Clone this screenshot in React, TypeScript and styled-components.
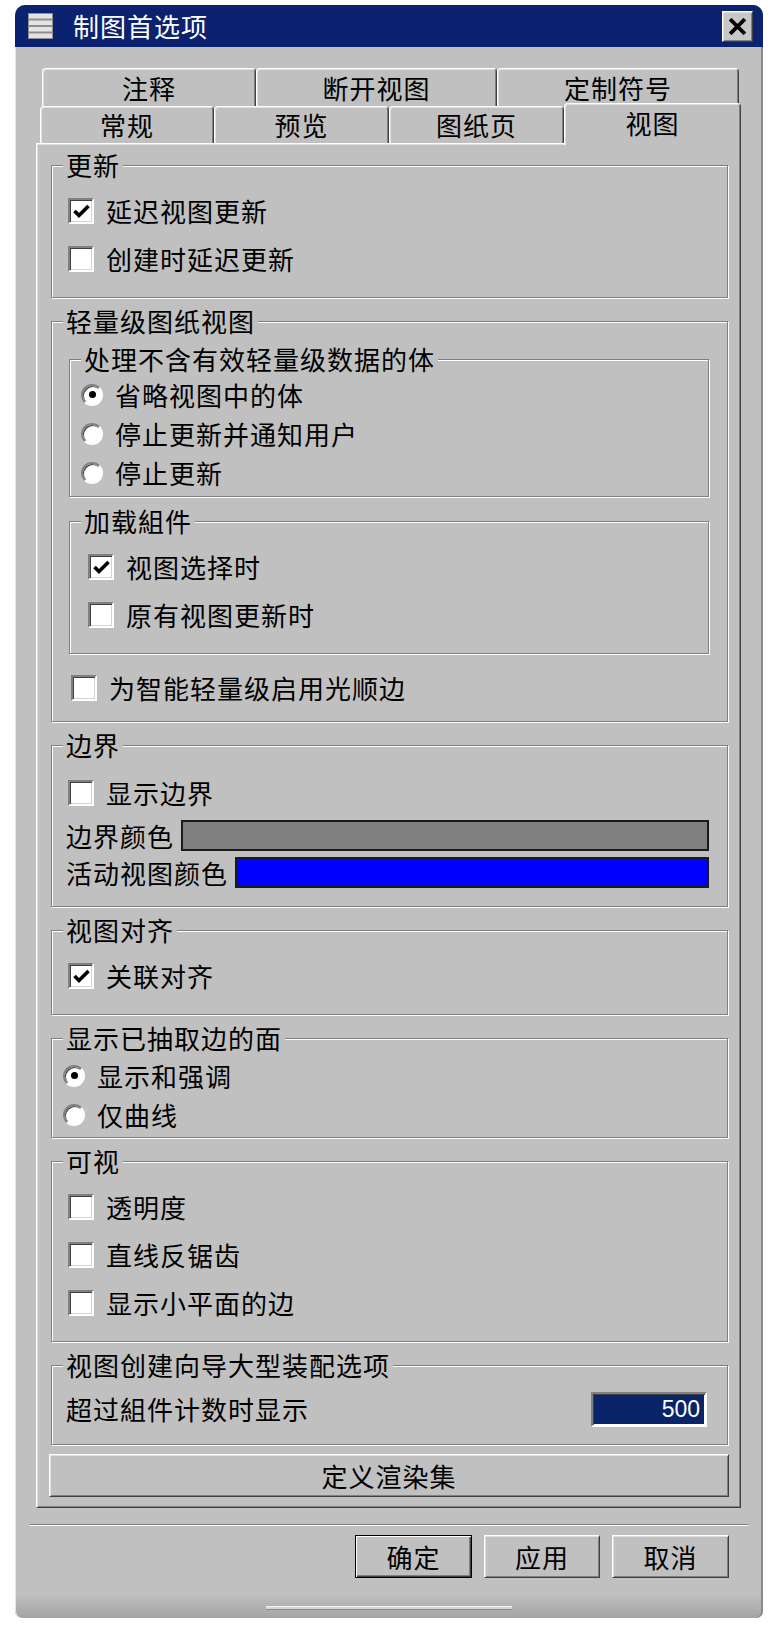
import React from 'react'
import styled, { createGlobalStyle, css } from 'styled-components'

const FONT = `"Noto Sans CJK SC", "Noto Sans", sans-serif`
const FACE = '#c0c0c0'

const GlobalStyle = createGlobalStyle`
  html, body {
    margin: 0;
    padding: 0;
    background: #fff;
  }
  body {
    font-family: ${FONT};
  }
`

const raised = css`
  border: 1px solid;
  border-color: #fff #404040 #404040 #fff;
  box-shadow: inset 1px 1px 0 #dfdfdf, inset -1px -1px 0 #808080;
`

const Window = styled.div`
  width: 748px;
  height: 1613px;
  margin: 5px 0 0 15px;
  box-sizing: border-box;
  display: flex;
  flex-direction: column;
  border-radius: 10px 10px 7px 7px;
  overflow: hidden;
  background: linear-gradient(to bottom, ${FACE} calc(100% - 24px), #a4a4a4 100%);
  box-shadow: inset 1px 0 0 #e4e4e4, inset -2px 0 0 #8a8a8a;
  font-family: ${FONT};
  font-size: 26px;
  letter-spacing: 1px;
  color: #000;
`

const TitleBar = styled.div`
  height: 42px;
  flex: none;
  display: flex;
  align-items: center;
  padding: 0 10px 0 13px;
  background: #0b2270;
`

const Title = styled.div`
  flex: 1;
  margin-left: 20px;
  color: #fff;
  line-height: 1;
`

const CloseButton = styled.div`
  width: 31px;
  height: 31px;
  box-sizing: border-box;
  display: flex;
  align-items: center;
  justify-content: center;
  background: #c8c8c8;
  ${raised}
`

const Body = styled.div`
  padding: 21px 22px 0 21px;
`

const TabStrip = styled.div`
  display: flex;
  flex-direction: column;
`

const TabRow = styled.div<{ $h: number; $indent: number }>`
  display: flex;
  align-items: flex-start;
  height: ${p => p.$h}px;
  padding-left: ${p => p.$indent}px;
`

const Tab = styled.div<{ $w: number; $h: number; $active?: boolean }>`
  width: ${p => p.$w}px;
  height: ${p => (p.$active ? p.$h + 5 : p.$h)}px;
  flex: none;
  box-sizing: border-box;
  display: flex;
  align-items: center;
  justify-content: center;
  line-height: 1;
  border-style: solid;
  border-width: 1px 1px 0 1px;
  border-color: #fff #404040 transparent #fff;
  border-radius: 4px 4px 0 0;
  box-shadow: inset 1px 1px 0 #dfdfdf, inset -1px 0 0 #808080;
  background: ${FACE};
  ${p =>
    p.$active &&
    css`
      margin-top: -3px;
      padding-bottom: 4px;
      position: relative;
      z-index: 1;
    `}
`

const Panel = styled.div`
  display: flex;
  flex-direction: column;
  gap: 9px;
  padding: 7px 12px 10px 14px;
  border: 1px solid;
  border-color: #fff #404040 #404040 #fff;
  box-shadow: inset 1px 1px 0 #dfdfdf, inset -1px -1px 0 #808080;
`

const Fieldset = styled.fieldset<{ $pad?: number; $pt?: number; $pb?: number; $gap?: number }>`
  margin: 0;
  min-width: 0;
  display: flex;
  flex-direction: column;
  gap: ${p => p.$gap ?? 0}px;
  border: 1px solid #808080;
  box-shadow: inset 1px 1px 0 #fff, 1px 1px 0 #fff;
  padding: ${p => p.$pt ?? 8}px 18px ${p => p.$pb ?? 14}px ${p => p.$pad ?? 14}px;
`

const Legend = styled.legend<{ $pad?: number }>`
  padding: 0 3px;
  margin-left: ${p => 11 - (p.$pad ?? 14)}px;
  line-height: 28px;
  background: ${FACE};
`

const OptionRow = styled.div<{ $h?: number }>`
  display: flex;
  align-items: center;
  gap: 12px;
  height: ${p => p.$h ?? 48}px;
  line-height: 1;
  white-space: nowrap;
`

const Box = styled.span`
  flex: none;
  width: 26px;
  height: 26px;
  margin-left: 2px;
  box-sizing: border-box;
  display: flex;
  align-items: center;
  justify-content: center;
  background: #fff;
  border: 2px solid;
  border-color: #808080 #fff #fff #808080;
  box-shadow: inset 1px 1px 0 #404040, inset -1px -1px 0 #d4d4d4;
`

const RadioDot = styled.span<{ $on?: boolean }>`
  flex: none;
  width: 22px;
  height: 22px;
  margin-left: -3px;
  box-sizing: border-box;
  display: flex;
  align-items: center;
  justify-content: center;
  border-radius: 50%;
  background: #fff;
  border: 2px solid;
  border-color: #808080 #fff #fff #808080;
  box-shadow: inset 1px 1px 0 #404040;
  &::after {
    content: '';
    width: 7px;
    height: 7px;
    border-radius: 50%;
    background: ${p => (p.$on ? '#000' : 'transparent')};
  }
`

const ColorRow = styled.div`
  display: flex;
  align-items: center;
  gap: 7px;
  height: 37px;
  line-height: 1;
  white-space: nowrap;
`

const Swatch = styled.div<{ $color: string }>`
  flex: 1;
  height: 31px;
  box-sizing: border-box;
  border: 2px solid #1a1a1a;
  background: ${p => p.$color};
`

const InputRow = styled.div`
  display: flex;
  align-items: center;
  justify-content: space-between;
  height: 44px;
  line-height: 1;
`

const NumberBox = styled.div`
  width: 116px;
  height: 35px;
  margin-right: 2px;
  box-sizing: border-box;
  padding: 1px;
  background: #fff;
  border: 2px solid;
  border-color: #808080 #fff #fff #808080;
  box-shadow: inset 1px 1px 0 #404040;
`

const NumberValue = styled.div`
  height: 100%;
  display: flex;
  align-items: center;
  justify-content: flex-end;
  padding-right: 4px;
  background: #0a246a;
  color: #fff;
  font-family: "Liberation Sans", Arial, sans-serif;
  font-size: 23px;
  letter-spacing: 0;
`

const WideButton = styled.div`
  height: 43px;
  margin: 0 -1px 0 -2px;
  box-sizing: border-box;
  display: flex;
  align-items: center;
  justify-content: center;
  line-height: 1;
  ${raised}
`

const Separator = styled.div`
  margin: 16px 15px 0;
  border-top: 1px solid #808080;
  border-bottom: 1px solid #fff;
`

const ButtonBar = styled.div`
  display: flex;
  justify-content: flex-end;
  gap: 12px;
  padding: 9px 34px 0 0;
`

const DialogButton = styled.div<{ $w: number; $default?: boolean }>`
  width: ${p => p.$w}px;
  height: 43px;
  box-sizing: border-box;
  display: flex;
  align-items: center;
  justify-content: center;
  line-height: 1;
  ${p =>
    p.$default
      ? css`
          border: 1px solid #000;
          box-shadow: inset 1px 1px 0 #fff, inset -1px -1px 0 #404040, inset -2px -2px 0 #808080;
        `
      : raised}
`

const Foot = styled.div`
  flex: 1;
  display: flex;
  justify-content: center;
  padding-top: 28px;
`

const Grip = styled.div`
  width: 246px;
  height: 2px;
  background: #d6d6d6;
  border-top: 1px solid #f2f2f2;
  border-bottom: 1px solid #8a8a8a;
`

const MenuIcon = () => (
  <svg width="25" height="26" viewBox="0 0 25 26">
    <rect width="25" height="26" fill="#8e8e8e" />
    {[1, 7.5, 14, 20.5].map(y => (
      <rect key={y} x="1" y={y} width="23" height="4.5" fill="#e4e4e4" />
    ))}
  </svg>
)

const CloseIcon = () => (
  <svg width="17" height="17" viewBox="0 0 17 17">
    <path d="M2.5 2.5 L14.5 14.5 M14.5 2.5 L2.5 14.5" stroke="#000" strokeWidth="3.8" strokeLinecap="square" />
  </svg>
)

const CheckMark = () => (
  <svg width="19" height="19" viewBox="0 0 19 19">
    <path d="M2.5 9 L7 13.5 L16.5 4" fill="none" stroke="#000" strokeWidth="3.6" />
  </svg>
)

const Check: React.FC<{ label: string; on?: boolean }> = ({ label, on }) => (
  <OptionRow>
    <Box>{on && <CheckMark />}</Box>
    <span>{label}</span>
  </OptionRow>
)

const Radio: React.FC<{ label: string; on?: boolean }> = ({ label, on }) => (
  <OptionRow $h={39}>
    <RadioDot $on={on} />
    <span>{label}</span>
  </OptionRow>
)

const backTabs = [
  { txt: '注释', w: 214 },
  { txt: '断开视图', w: 241 },
  { txt: '定制符号', w: 242 },
]
const frontTabs = [
  { txt: '常规', w: 174 },
  { txt: '预览', w: 175 },
  { txt: '图纸页', w: 175 },
  { txt: '视图', w: 177, active: true },
]

export default function App() {
  return (
    <>
      <GlobalStyle />
      <Window>
        <TitleBar>
          <MenuIcon />
          <Title>制图首选项</Title>
          <CloseButton>
            <CloseIcon />
          </CloseButton>
        </TitleBar>

        <Body>
          <TabStrip>
            <TabRow $h={38} $indent={6}>
              {backTabs.map(t => (
                <Tab key={t.txt} $w={t.w} $h={38}>
                  {t.txt}
                </Tab>
              ))}
            </TabRow>
            <TabRow $h={37} $indent={4}>
              {frontTabs.map(t => (
                <Tab key={t.txt} $w={t.w} $h={37} $active={t.active}>
                  {t.txt}
                </Tab>
              ))}
            </TabRow>
          </TabStrip>

          <Panel>
            <Fieldset>
              <Legend>更新</Legend>
              <Check label="延迟视图更新" on />
              <Check label="创建时延迟更新" />
            </Fieldset>

            <Fieldset $pad={17} $pt={10} $pb={9} $gap={10}>
              <Legend $pad={17}>轻量级图纸视图</Legend>
              <Fieldset $pt={2} $pb={4}>
                <Legend>处理不含有效轻量级数据的体</Legend>
                <Radio label="省略视图中的体" on />
                <Radio label="停止更新并通知用户" />
                <Radio label="停止更新" />
              </Fieldset>
              <Fieldset $pad={16}>
                <Legend $pad={16}>加载組件</Legend>
                <Check label="视图选择时" on />
                <Check label="原有视图更新时" />
              </Fieldset>
              <Check label="为智能轻量级启用光顺边" />
            </Fieldset>

            <Fieldset $pt={10} $pb={15}>
              <Legend>边界</Legend>
              <Check label="显示边界" />
              <ColorRow>
                <span>边界颜色</span>
                <Swatch $color="#808080" />
              </ColorRow>
              <ColorRow>
                <span>活动视图颜色</span>
                <Swatch $color="#0000ff" />
              </ColorRow>
            </Fieldset>

            <Fieldset>
              <Legend>视图对齐</Legend>
              <Check label="关联对齐" on />
            </Fieldset>

            <Fieldset $pt={4} $pb={3}>
              <Legend>显示已抽取边的面</Legend>
              <Radio label="显示和强调" on />
              <Radio label="仅曲线" />
            </Fieldset>

            <Fieldset>
              <Legend>可视</Legend>
              <Check label="透明度" />
              <Check label="直线反锯齿" />
              <Check label="显示小平面的边" />
            </Fieldset>

            <Fieldset $pb={13}>
              <Legend>视图创建向导大型装配选项</Legend>
              <InputRow>
                <span>超过組件计数时显示</span>
                <NumberBox>
                  <NumberValue>500</NumberValue>
                </NumberBox>
              </InputRow>
            </Fieldset>

            <WideButton>定义渲染集</WideButton>
          </Panel>
        </Body>

        <Separator />
        <ButtonBar>
          <DialogButton $w={117} $default>
            确定
          </DialogButton>
          <DialogButton $w={116}>应用</DialogButton>
          <DialogButton $w={117}>取消</DialogButton>
        </ButtonBar>
        <Foot>
          <Grip />
        </Foot>
      </Window>
    </>
  )
}
